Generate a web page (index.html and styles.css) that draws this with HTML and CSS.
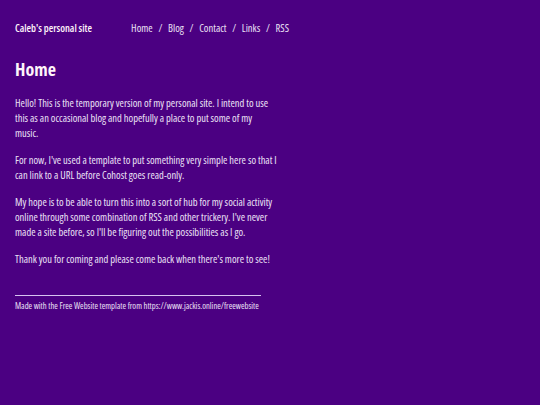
FILE: index.html
```html
<!DOCTYPE html>
<html>

<head>
    <meta name="viewport" content="width=device-width, initial-scale=1.0">
    <title>Caleb's personal site</title>
    <link rel="stylesheet" href="styles.css">
</head>

<body>
    <div class="page">
        <header class="site-header">
            <a class="site-title" href="#">Caleb's personal site</a>
            <nav class="site-nav">
                <a href="#">Home</a>
                <span class="sep">/</span>
                <a href="#">Blog</a>
                <span class="sep">/</span>
                <a href="#">Contact</a>
                <span class="sep">/</span>
                <a href="#">Links</a>
                <span class="sep">/</span>
                <a href="#">RSS</a>
            </nav>
        </header>

        <main class="content">
            <h1>Home</h1>
            <p>Hello! This is the temporary version of my personal site. I intend to use this as an occasional blog and hopefully a place to put some of my music.</p>
            <p>For now, I've used a template to put something very simple here so that I can link to a URL before Cohost goes read-only.</p>
            <p>My hope is to be able to turn this into a sort of hub for my social activity online through some combination of RSS and other trickery. I've never made a site before, so I'll be figuring out the possibilities as I go.</p>
            <p>Thank you for coming and please come back when there's more to see!</p>
        </main>

        <footer class="site-footer">
            Made with the Free Website template from https://www.jackis.online/freewebsite
        </footer>
    </div>
</body>

</html>
```

FILE: styles.css
```css
:root {
    --bg-color: #4b0082;
    --text-color: #ece2f6;
    --heading-color: #fff4fa;
}

body {
    margin: 0;
    background-color: var(--bg-color);
    color: var(--text-color);
    font-family: 'Open Sans', 'Noto Sans', sans-serif;
    font-stretch: condensed;
    font-size: 10.5px;
    line-height: 15px;
}

a {
    color: inherit;
    text-decoration: none;
}

.page {
    display: flex;
    flex-direction: column;
    padding: 21px 15px;
}

.site-header {
    display: flex;
    align-items: center;
    justify-content: space-between;
    width: 274px;
}

.site-title {
    font-weight: 600;
    font-size: 10.3px;
    color: var(--heading-color);
}

.site-nav {
    display: flex;
    gap: 5.75px;
    font-size: 10.5px;
}

.content {
    width: 262px;
    margin-top: 22px;
}

h1 {
    margin: 0 0 16px;
    font-size: 18px;
    line-height: 22px;
    font-weight: 700;
    color: var(--heading-color);
}

p {
    margin: 0 0 12px;
}

.site-footer {
    width: 246px;
    margin-top: 16px;
    padding-top: 4px;
    border-top: 1px solid #d7c2f0;
    font-size: 8.6px;
    line-height: 12px;
    white-space: nowrap;
}
```
